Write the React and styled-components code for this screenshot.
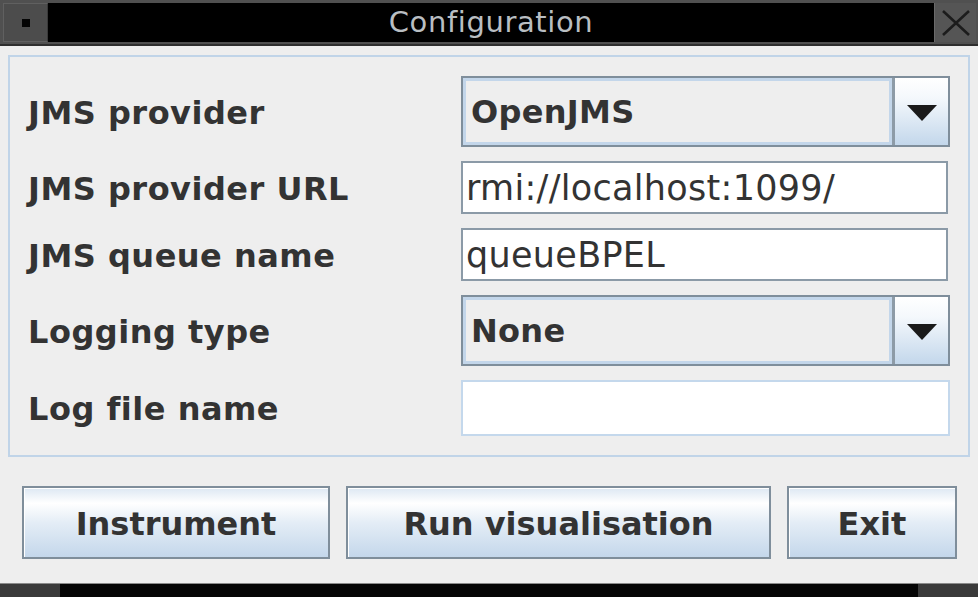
import React from 'react';
import styled, { createGlobalStyle } from 'styled-components';

const GlobalStyle = createGlobalStyle`
  html, body {
    margin: 0;
    padding: 0;
    background: #000;
  }
  * {
    box-sizing: border-box;
  }
`;

const rows = [
  { label: 'JMS provider', kind: 'combo', value: 'OpenJMS' },
  { label: 'JMS provider URL', kind: 'field', value: 'rmi://localhost:1099/' },
  { label: 'JMS queue name', kind: 'field', value: 'queueBPEL' },
  { label: 'Logging type', kind: 'combo', value: 'None' },
  { label: 'Log file name', kind: 'field', value: '', disabled: true },
];

function App() {
  return (
    <>
      <GlobalStyle />
      <Window>
        <TitleBar>
          <MenuBox>
            <Dot />
          </MenuBox>
          <TitleArea>Configuration</TitleArea>
          <CloseBox>
            <svg width='30' height='28' viewBox='0 0 30 28'>
              <path d='M2 2 L28 26 M28 2 L2 26' stroke='#1c1c1c' strokeWidth='2.6' fill='none' />
            </svg>
          </CloseBox>
        </TitleBar>
        <Content>
          <Panel>
            {rows.map((row, index) => (
              <React.Fragment key={index}>
                <Label>{row.label}</Label>
                {row.kind === 'combo' ? (
                  <Combo>
                    <ComboValue>{row.value}</ComboValue>
                    <ArrowButton>
                      <svg width='30' height='16' viewBox='0 0 30 16'>
                        <path d='M0 0 L30 0 L15 16 Z' fill='#1a1a1a' />
                      </svg>
                    </ArrowButton>
                  </Combo>
                ) : (
                  <Field disabled={row.disabled}>{row.value}</Field>
                )}
              </React.Fragment>
            ))}
          </Panel>
          <ButtonRow>
            <Button width={308}>Instrument</Button>
            <Button width={425}>Run visualisation</Button>
            <Button width={170}>Exit</Button>
          </ButtonRow>
        </Content>
        <BottomStrip>
          <StripEnd />
          <StripEnd />
        </BottomStrip>
      </Window>
    </>
  );
}

export default App;

const Window = styled.div`
  width: 978px;
  height: 597px;
  display: flex;
  flex-direction: column;
  overflow: hidden;
  font-family: 'DejaVu Sans', 'Liberation Sans', sans-serif;
`;

const TitleBar = styled.div`
  height: 46px;
  display: flex;
  align-items: stretch;
  padding: 3px 2px 2px 3px;
  background: #505050;
  border-bottom: 2px solid #2e2e2e;
`;

const MenuBox = styled.div`
  width: 45px;
  display: flex;
  align-items: center;
  justify-content: center;
  background: #4c4c4c;
  border: 1px solid #606060;
  border-right-color: #3a3a3a;
`;

const Dot = styled.div`
  width: 8px;
  height: 8px;
  background: #050505;
`;

const TitleArea = styled.div`
  flex: 1;
  background: #000;
  color: #b9bec2;
  font-size: 29px;
  display: flex;
  align-items: center;
  justify-content: center;
  padding-bottom: 2px;
  letter-spacing: 0.6px;
`;

const CloseBox = styled.div`
  width: 42px;
  display: flex;
  align-items: center;
  justify-content: center;
  background: #555;
  border-left: 1px solid #6a6a6a;
`;

const Content = styled.div`
  flex: 1;
  background: #eeeeee;
  padding: 9px 8px 0 8px;
  display: flex;
  flex-direction: column;
  border-bottom: 1px solid #8a8a8a;
`;

const Panel = styled.div`
  border: 2px solid #c0d4e8;
  padding: 19px 18px 19px 18px;
  display: grid;
  grid-template-columns: 433px 1fr;
  grid-template-rows: 71px 53px 53px 71px 56px;
  row-gap: 14px;
  align-items: center;
`;

const Label = styled.div`
  font-weight: bold;
  font-size: 32px;
  letter-spacing: 0.5px;
  color: #333333;
  padding-top: 2px;
`;

const Combo = styled.div`
  height: 100%;
  display: flex;
  border: 2px solid #7f8e9b;
  background: #eeeeee;
`;

const ComboValue = styled.div`
  flex: 1;
  display: flex;
  align-items: center;
  padding-left: 5px;
  border: 3px solid #c3d6ea;
  font-weight: bold;
  font-size: 32px;
  letter-spacing: 0.3px;
  color: #333333;
`;

const ArrowButton = styled.div`
  width: 56px;
  display: flex;
  align-items: center;
  justify-content: center;
  border-left: 3px solid #8d9ba7;
  background: linear-gradient(#ffffff 0%, #f4f8fc 30%, #c3d7eb 100%);
  padding-top: 2px;
`;

const Field = styled.div`
  height: 100%;
  width: ${props => (props.disabled ? '100%' : 'calc(100% - 2px)')};
  display: flex;
  align-items: center;
  padding-left: 3px;
  background: #ffffff;
  border: 2px solid ${props => (props.disabled ? '#c4d8ec' : '#8b9aa7')};
  box-shadow: ${props => (props.disabled ? 'none' : 'inset 0 -2px 0 #ffffff, inset -2px 0 0 #ffffff')};
  font-size: 35px;
  letter-spacing: 0.3px;
  color: #333333;
  white-space: nowrap;
  overflow: hidden;
`;

const ButtonRow = styled.div`
  display: flex;
  gap: 16px;
  margin-top: 29px;
  padding-left: 14px;
`;

const Button = styled.div`
  width: ${props => props.width}px;
  height: 73px;
  display: flex;
  align-items: center;
  justify-content: center;
  border: 2px solid #7f8e9b;
  box-shadow: inset 1px 1px 0 #ffffff;
  background: linear-gradient(#dde8f3 0%, #ffffff 22%, #e4edf6 50%, #c4d7eb 100%);
  font-weight: bold;
  font-size: 32px;
  color: #333333;
  padding-top: 2px;
`;

const BottomStrip = styled.div`
  height: 13px;
  background: #050505;
  display: flex;
  justify-content: space-between;
`;

const StripEnd = styled.div`
  width: 60px;
  background: #3a3a3a;
`;
